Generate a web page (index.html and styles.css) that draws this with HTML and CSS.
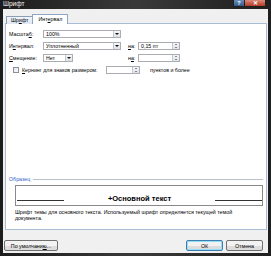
FILE: index.html
```html
<!DOCTYPE html>
<html lang="ru">
<head>
<meta charset="utf-8">
<title>Шрифт</title>
<link rel="stylesheet" href="styles.css">
</head>
<body>
<div class="window">
  <div class="titlebar">
    <span class="title">Шрифт</span>
    <div class="caption-btns">
      <span class="cbtn help">?</span>
      <span class="cbtn close">✕</span>
    </div>
  </div>
  <div class="client">
    <div class="tabs">
      <div class="tab">Шр<u>и</u>фт</div>
      <div class="tab active">Инт<u>е</u>рвал</div>
    </div>
    <div class="panel">
      <div class="rows">
        <div class="row">
          <span class="lbl">Масшта<u>б</u>:</span>
          <div class="combo wide"><span class="val">100%</span><i class="drop"></i></div>
        </div>
        <div class="row">
          <span class="lbl">И<u>н</u>тервал:</span>
          <div class="combo wide"><span class="val">Уплотненный</span><i class="drop"></i></div>
          <span class="na"><u>н</u>а:</span>
          <div class="spin"><span class="val">0,15 пт</span><i class="arrows"><b class="up"></b><b class="down"></b></i></div>
        </div>
        <div class="row">
          <span class="lbl"><u>С</u>мещение:</span>
          <div class="combo narrow"><span class="val">Нет</span><i class="drop"></i></div>
          <span class="na n2">н<u>а</u>:</span>
          <div class="spin"><span class="val"></span><i class="arrows"><b class="up"></b><b class="down"></b></i></div>
        </div>
        <div class="row">
          <span class="check"></span>
          <span class="klbl"><u>К</u>ернинг для знаков размером:</span>
          <div class="spin small"><span class="val"></span><i class="arrows"><b class="up"></b><b class="down"></b></i></div>
          <span class="pts">пунктов и более</span>
        </div>
      </div>
      <div class="sample">
        <div class="legend"><span>Образец</span><i class="rule"></i></div>
        <div class="preview">
          <i class="pline"></i>
          <span class="ptext">+Основной текст</span>
          <i class="pline"></i>
        </div>
        <p class="desc">Шрифт темы для основного текста. Используемый шрифт определяется текущей темой документа.</p>
      </div>
    </div>
    <div class="footer">
      <button class="btn def">По умолчани<u>ю</u>...</button>
      <div class="right">
        <button class="btn ok">ОК</button>
        <button class="btn">Отмена</button>
      </div>
    </div>
  </div>
</div>
</body>
</html>
```
FILE: styles.css
```css
html, body {
  margin: 0;
  padding: 0;
  background: #2a2a2a;
}
body {
  width: 271px;
  height: 256px;
  overflow: hidden;
  font-family: "Liberation Sans", Arial, sans-serif;
  font-size: 5.3px;
  color: #000;
}
u { text-decoration: underline; }
.window {
  width: 271px;
  height: 256px;
  display: flex;
  flex-direction: column;
  background: linear-gradient(90deg, #1c1c1c, #3a3a3a 50%, #1f1f1f);
  box-sizing: border-box;
}
.titlebar {
  height: 9px;
  display: flex;
  align-items: flex-start;
  padding: 0 5px 0 3px;
  flex: none;
}
.title {
  color: #f4f4f4;
  font-size: 6.5px;
  line-height: 8px;
}
.caption-btns {
  margin-left: auto;
  display: flex;
}
.cbtn {
  height: 7px;
  line-height: 7px;
  color: #fff;
  text-align: center;
  font-size: 5.5px;
  font-weight: bold;
  border: 1px solid #202020;
  border-top: none;
  box-sizing: border-box;
}
.help {
  width: 12px;
  background: linear-gradient(#6a8fbf, #36598c);
  border-radius: 0 0 0 2px;
}
.close {
  width: 21px;
  background: linear-gradient(#d98a7a, #b73a22);
  border-left: none;
  border-radius: 0 0 2px 0;
}
.client {
  flex: 1;
  margin: 0 3px 3px 3px;
  background: #f0f0f0;
  display: flex;
  flex-direction: column;
  padding: 6px 1px 0 2px;
}
.tabs {
  display: flex;
  align-items: flex-end;
  height: 9px;
  padding-left: 1px;
  position: relative;
  z-index: 1;
  margin-bottom: -1px;
}
.tab {
  height: 7px;
  line-height: 7px;
  padding: 0 4px;
  border: 1px solid #8c9db3;
  border-bottom: none;
  background: linear-gradient(#f2f5fa, #dde6f2);
  border-radius: 1px 1px 0 0;
}
.tab.active {
  height: 9px;
  line-height: 9px;
  background: #fff;
  padding: 0 5px;
  margin-left: -1px;
  border-color: #8ea6c4;
}
.panel {
  flex: 1;
  background: #fff;
  border: 1px solid #a9bdd4;
  display: flex;
  flex-direction: column;
  padding: 6px 0 8px 0;
}
.rows {
  display: flex;
  flex-direction: column;
  gap: 4px;
  padding-left: 3px;
}
.row {
  display: flex;
  align-items: center;
  height: 8px;
}
.lbl {
  width: 34px;
  flex: none;
}
.combo {
  height: 8px;
  box-sizing: border-box;
  border: 1px solid #abadb3;
  display: flex;
  align-items: center;
  background: #fff;
  flex: none;
}
.combo.wide { width: 78px; }
.combo.narrow { width: 30px; }
.val {
  flex: 1;
  min-width: 0;
  padding-left: 2px;
  line-height: 6px;
  white-space: nowrap;
  overflow: hidden;
}
.drop {
  width: 7px;
  height: 6px;
  flex: none;
  box-sizing: border-box;
  border-left: 1px solid #c4c8ce;
  background: linear-gradient(#f6f8fa, #dde2e8);
  position: relative;
}
.drop::after {
  content: "";
  position: absolute;
  left: 1px;
  top: 2px;
  border-left: 2px solid transparent;
  border-right: 2px solid transparent;
  border-top: 2px solid #111;
}
.na {
  margin-left: 7px;
  width: 10px;
  flex: none;
}
.n2 { margin-left: 55px; }
.spin {
  width: 42px;
  height: 8px;
  flex: none;
  box-sizing: border-box;
  border: 1px solid #abadb3;
  display: flex;
  align-items: center;
}
.spin.small {
  width: 34px;
  margin-left: 3px;
}
.arrows {
  width: 6px;
  height: 6px;
  flex: none;
  display: flex;
  flex-direction: column;
  justify-content: space-around;
  align-items: center;
  background: linear-gradient(#f3f5f8, #dfe4ea);
  border-left: 1px solid #c4c8ce;
}
.up, .down {
  width: 0;
  height: 0;
  border-left: 1.5px solid transparent;
  border-right: 1.5px solid transparent;
}
.up { border-bottom: 1.5px solid #222; }
.down { border-top: 1.5px solid #222; }
.check {
  width: 6px;
  height: 6px;
  flex: none;
  box-sizing: border-box;
  border: 1px solid #8f8f8f;
  background: linear-gradient(135deg, #dfe6ee, #fafcfe);
  margin-left: 4px;
  margin-right: 3px;
}
.klbl {
  width: 81px;
  flex: none;
  white-space: nowrap;
}
.pts {
  margin-left: 10px;
  white-space: nowrap;
}
.sample {
  margin-top: auto;
  display: flex;
  flex-direction: column;
}
.legend {
  display: flex;
  align-items: center;
  padding: 0 3px 0 3px;
  height: 6px;
}
.legend span { color: #2a63c8; }
.rule {
  flex: 1;
  height: 1px;
  background: #b9c0c8;
  margin-left: 3px;
}
.preview {
  margin: 3px 3px 0 9px;
  height: 21px;
  box-sizing: border-box;
  border: 1px solid #8a8a8a;
  display: flex;
  align-items: center;
  padding: 6px 0 0 1px;
}
.pline {
  flex: 1;
  height: 1px;
  background: #333;
  margin-top: 3px;
}
.ptext {
  font-weight: bold;
  font-size: 7.5px;
  padding: 0 44px;
  white-space: nowrap;
}
.desc {
  margin: 3px 0 0 9px;
  line-height: 6px;
  padding-right: 8px;
}
.footer {
  display: flex;
  align-items: center;
  height: 11px;
  margin: 10px 4px 2px -1px;
}
.right {
  margin-left: auto;
  display: flex;
  gap: 3px;
}
.btn {
  font-family: "Liberation Sans", Arial, sans-serif;
  font-size: 5.3px;
  height: 11px;
  padding: 0;
  border: 1px solid #707070;
  border-radius: 2px;
  background: linear-gradient(#f2f2f2 50%, #dcdcdc 50%);
  color: #000;
  width: 37px;
}
.btn.def { width: 54px; }
.btn.ok {
  border-color: #3c7fb1;
  box-shadow: inset 0 0 0 1px #94dcf5;
}
```
